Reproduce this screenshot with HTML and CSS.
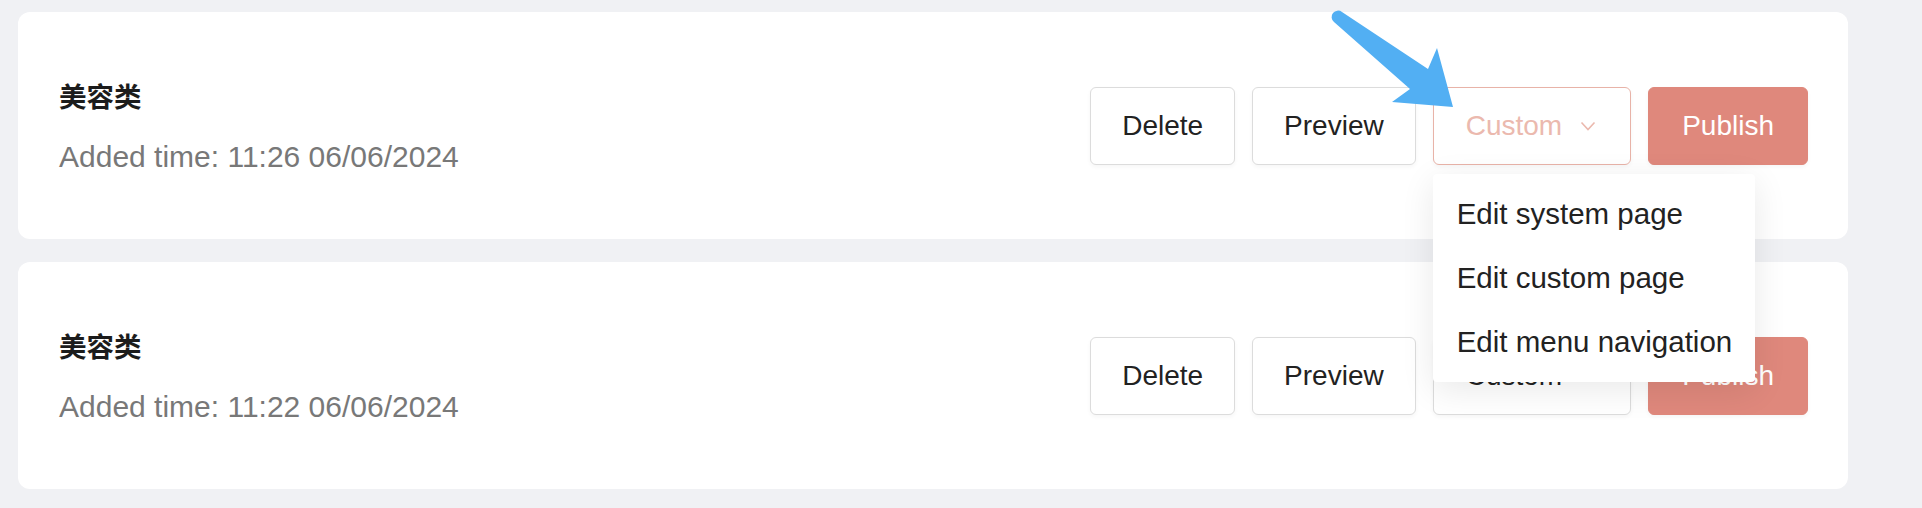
FILE: index.html
```html
<!DOCTYPE html>
<html lang="en">
<head>
    <meta charset="UTF-8">
    <meta name="viewport" content="width=device-width, initial-scale=1.0">
    <title>Templates</title>
    <link rel="stylesheet" href="styles.css">
</head>
<body>
    <div class="list">
        <div class="card">
            <div class="info">
                <div class="name">美容类</div>
                <div class="time">Added time: 11:26 06/06/2024</div>
            </div>
            <div class="actions">
                <button class="btn">Delete</button>
                <button class="btn">Preview</button>
                <div class="dropdown">
                    <button class="btn btn-custom is-open">Custom
                        <svg class="caret" width="16" height="10" viewBox="0 0 16 10"><polyline points="1.5,1.5 8,8.5 14.5,1.5" fill="none" stroke="currentColor" stroke-width="1.6"/></svg>
                    </button>
                    <ul class="menu">
                        <li>Edit system page</li>
                        <li>Edit custom page</li>
                        <li>Edit menu navigation</li>
                    </ul>
                </div>
                <button class="btn btn-primary">Publish</button>
            </div>
        </div>

        <div class="card">
            <div class="info">
                <div class="name">美容类</div>
                <div class="time">Added time: 11:22 06/06/2024</div>
            </div>
            <div class="actions">
                <button class="btn">Delete</button>
                <button class="btn">Preview</button>
                <div class="dropdown">
                    <button class="btn btn-custom">Custom
                        <svg class="caret" width="16" height="10" viewBox="0 0 16 10"><polyline points="1.5,1.5 8,8.5 14.5,1.5" fill="none" stroke="currentColor" stroke-width="1.6"/></svg>
                    </button>
                </div>
                <button class="btn btn-primary">Publish</button>
            </div>
        </div>
    </div>

    <!-- annotation arrow pointing at the Custom button -->
    <svg class="pointer" width="150" height="120" viewBox="0 0 150 120">
        <path d="M22,12 L108,69 L117,48 L133,107 L72,102 L90,89 L14,22 A6,6 0 0 1 22,12 Z" fill="#52aff3"/>
    </svg>
</body>
</html>
```

FILE: styles.css
```css
body {
    margin: 0;
    background-color: #f0f1f4;
    font-family: 'Liberation Sans', Arial, 'Noto Sans CJK SC', sans-serif;
    color: #222;
}
.list {
    display: flex;
    flex-direction: column;
    gap: 23px;
    padding: 12px 74px 19px 18px;
}
.card {
    display: flex;
    align-items: center;
    justify-content: space-between;
    height: 227px;
    box-sizing: border-box;
    padding: 0 40px 0 41px;
    background-color: #fff;
    border-radius: 12px;
}
.card:first-child {
    position: relative;
    z-index: 2;
}
.name {
    font-family: 'Noto Sans CJK SC', sans-serif;
    font-size: 27.5px;
    font-weight: bold;
    line-height: 36px;
    color: #1c1c1c;
}
.time {
    margin-top: 26px;
    font-size: 30px;
    line-height: 36px;
    color: #787878;
}
.actions {
    display: flex;
    align-items: center;
    gap: 17px;
}
.btn {
    height: 78px;
    padding: 0 31px;
    font-family: inherit;
    font-size: 28px;
    line-height: 1;
    color: #222;
    background-color: #fff;
    border: 1px solid #dcdcdc;
    border-radius: 6px;
    box-shadow: 0 2px 4px rgba(0, 0, 0, 0.04);
    cursor: pointer;
}
.btn-custom {
    display: inline-flex;
    align-items: center;
    gap: 18px;
    padding: 0 34px 0 32px;
}
.btn-custom.is-open {
    color: #ebb9ae;
    border-color: #e8b3a8;
}
.btn-primary {
    color: #fff;
    background-color: #df887c;
    border-color: #df887c;
    padding: 0 33px;
}
.dropdown {
    position: relative;
}
.menu {
    position: absolute;
    top: calc(100% + 9px);
    left: 0;
    z-index: 5;
    width: 322px;
    box-sizing: border-box;
    margin: 0;
    padding: 8px 0;
    list-style: none;
    background-color: #fff;
    border-radius: 4px;
    box-shadow: 0 8px 34px rgba(0, 0, 0, 0.09);
}
.menu li {
    padding: 0 24px;
    font-size: 29.5px;
    line-height: 64px;
    color: #222;
    white-space: nowrap;
}
.pointer {
    position: absolute;
    left: 1320px;
    top: 0;
    z-index: 10;
}
```
